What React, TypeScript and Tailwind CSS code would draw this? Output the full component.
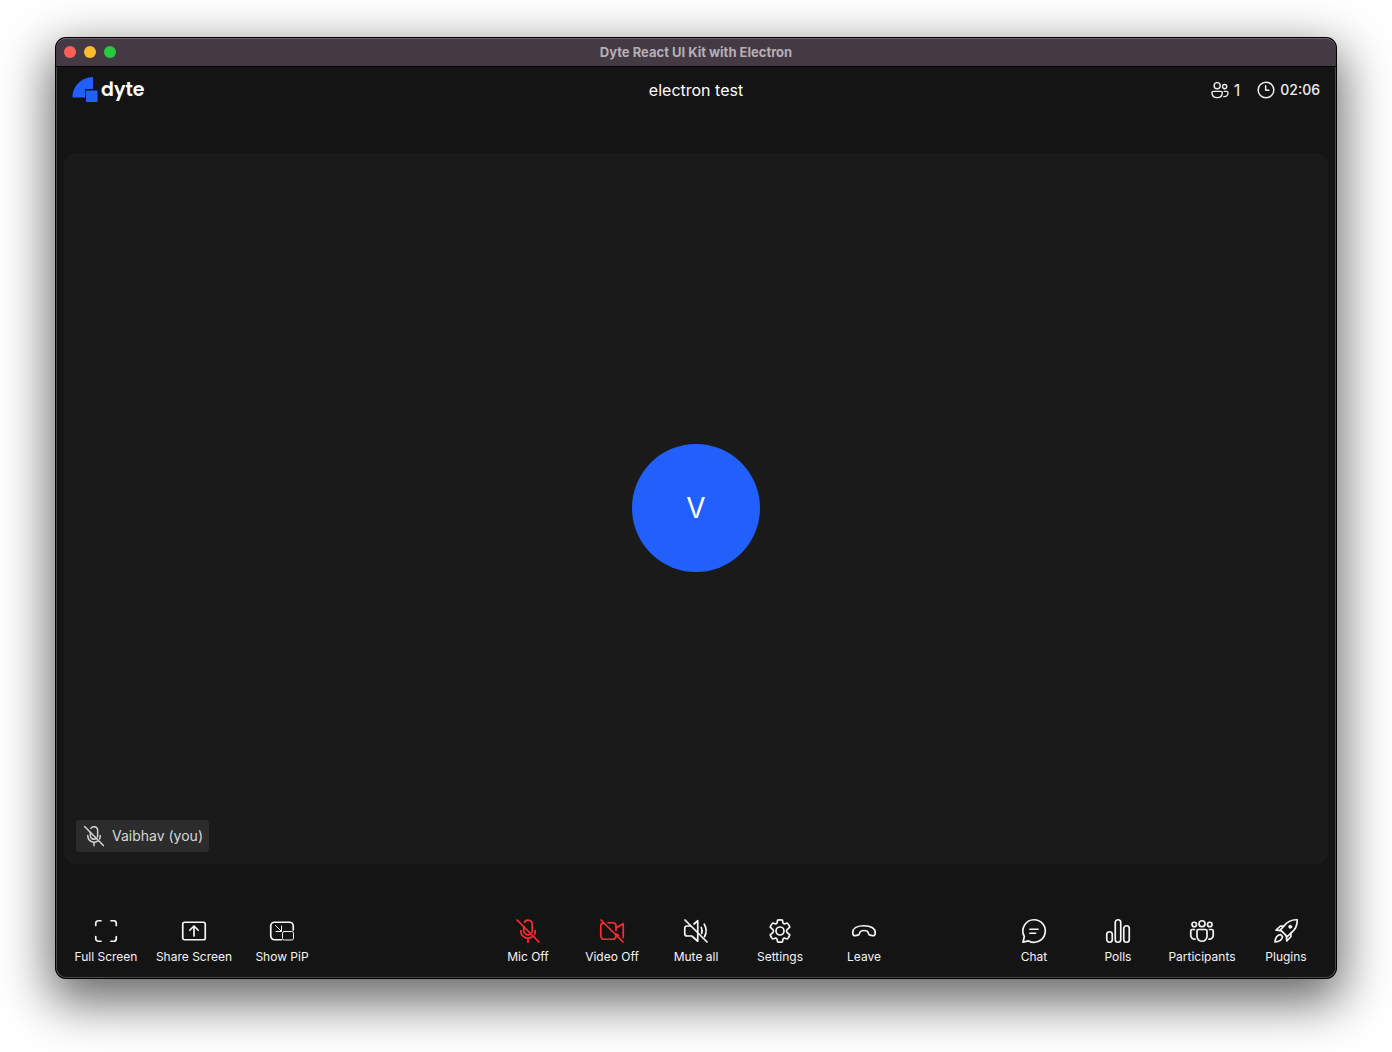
import React from "react";

type IconProps = { className?: string; children?: React.ReactNode; strokeWidth?: number };

function Icon({ className = "size-7", children, strokeWidth = 1.7 }: IconProps) {
  return (
    <svg
      viewBox="0 0 28 28"
      fill="none"
      stroke="currentColor"
      strokeWidth={strokeWidth}
      strokeLinecap="round"
      strokeLinejoin="round"
      className={className}
      aria-hidden="true"
    >
      {children}
    </svg>
  );
}

const FullScreenIcon = () => (
  <Icon>
    <path d="M3.75 8.5V6.25a2.5 2.5 0 0 1 2.5-2.5H9M19 3.75h2.75a2.5 2.5 0 0 1 2.5 2.5V8.5M24.25 19.5v2.25a2.5 2.5 0 0 1-2.5 2.5H19M9 24.25H6.25a2.5 2.5 0 0 1-2.5-2.5V19.5" />
  </Icon>
);

const ShareIcon = () => (
  <Icon>
    <rect x="2.75" y="5.25" width="22.5" height="17.5" rx="1.75" />
    <path d="M14 19V9.5M9.75 13.25 14 9l4.25 4.25" />
  </Icon>
);

const PipIcon = () => (
  <Icon>
    <path d="M13.5 22.75H6.5a3.75 3.75 0 0 1-3.75-3.75V9A3.75 3.75 0 0 1 6.5 5.25h15A3.75 3.75 0 0 1 25.25 9v4" />
    <rect x="14.5" y="14.5" width="11" height="8.5" rx="1.75" strokeWidth="1" />
    <path d="m7.500 8.500 5.500 5.500M13.500 9v5.500H8" strokeWidth="1" />
  </Icon>
);

const MicOffIcon = ({ className }: { className?: string }) => (
  <Icon className={className}>
    <path d="M3 3l22 22" />
    <path d="M10.4 5.2A4.25 4.25 0 0 1 18.25 7v6.5c0 .7-.15 1.3-.4 1.9M9.75 9.8v3.7a4.25 4.25 0 0 0 6.4 3.7" />
    <path d="M6.75 13.5v.5A7.25 7.25 0 0 0 18 20M21.25 13.5v.5c0 1.2-.3 2.4-.8 3.4M14 21.25v4" />
  </Icon>
);

const VideoOffIcon = () => (
  <Icon>
    <path d="M3 3l22 22" />
    <path d="M10 5.75h4.75A3.25 3.25 0 0 1 18 9v4.5M18 18v1a3.25 3.25 0 0 1-3.25 3.25H6A3.25 3.25 0 0 1 2.75 19V9A3.25 3.25 0 0 1 5.5 5.8" />
    <path d="m18 11 7.25-4.25V20.5M18 17l2.5 1.5" />
  </Icon>
);

const MuteIcon = () => (
  <Icon>
    <path d="M3 3l22 22" />
    <path d="m12 7 3.75-3.25V15M15.75 16.5v7.75L9.75 19H5a2.25 2.25 0 0 1-2.25-2.25v-5.5A2.25 2.25 0 0 1 5 9h3.5" />
    <path d="M19.25 10.5a8 8 0 0 1 .4 6M22.25 7.25a13 13 0 0 1 .3 12.5" />
  </Icon>
);

const SettingsIcon = () => (
  <Icon>
    <circle cx="14" cy="14" r="4" />
    <path d="M11.6 3.1q2.4-.5 4.8 0l.5 2.5q.4 1.5 1.9 1.2l2.5-.8q1.7 1.8 2.5 4.1l-2 1.8q-1.3 1.1-1.3 2.1t1.3 2.1l2 1.8q-.8 2.3-2.5 4.1l-2.5-.8q-1.5-.3-1.9 1.2l-.5 2.5q-2.4.5-4.8 0l-.5-2.500q-.4-1.500-1.900-1.200l-2.500.8q-1.700-1.800-2.500-4.100l2-1.800Q7.500 15 7.500 14t-1.300-2.100l-2-1.800q.8-2.300 2.500-4.100l2.500.8q1.500.3 1.900-1.200z" />
  </Icon>
);

const LeaveIcon = () => (
  <Icon>
    <path d="M14 8.750c6.500 0 11.250 2.400 11.250 6.700 0 2.600-1 3.600-2.700 3.250l-2.400-.5c-1.100-.25-1.500-.8-1.700-1.900-.3-1.700-.9-2.800-4.450-2.800s-4.150 1.100-4.450 2.800c-.2 1.100-.6 1.650-1.700 1.900l-2.400.5c-1.700.35-2.700-.65-2.700-3.250 0-4.300 4.750-6.700 11.250-6.700z" />
  </Icon>
);

const ChatIcon = () => (
  <Icon>
    <path d="M14 2.750A11.250 11.250 0 1 1 8.700 23.900L3 25.200l1.300-5.700A11.250 11.250 0 0 1 14 2.750z" />
    <path d="M10 12.250h8M10 16.250h5.500" />
  </Icon>
);

const PollsIcon = () => (
  <Icon>
    <rect x="2.750" y="14.750" width="5.500" height="10.500" rx="2.700" />
    <rect x="11.250" y="2.750" width="5.500" height="22.500" rx="2.700" />
    <rect x="19.750" y="8.750" width="5.500" height="16.500" rx="2.700" />
  </Icon>
);

const ParticipantsIcon = () => (
  <Icon>
    <circle cx="14" cy="6.750" r="3" />
    <circle cx="6.250" cy="7.500" r="2.250" />
    <circle cx="21.750" cy="7.500" r="2.250" />
    <path d="M10.500 12.500h7a1.500 1.500 0 0 1 1.500 1.500v5.250a5 5 0 0 1-10 0V14a1.500 1.500 0 0 1 1.500-1.500z" />
    <path d="M6.500 12.500H4.250a1.500 1.500 0 0 0-1.500 1.500v4.250A4 4 0 0 0 7 22.200M21.500 12.500h2.250a1.500 1.500 0 0 1 1.500 1.500v4.250A4 4 0 0 1 21 22.200" />
  </Icon>
);

const PluginsIcon = () => (
  <Icon>
    <path d="M25.200 2.800c-5.700-.3-10 1.900-13.200 6.200L8.400 12.800l6.800 6.800 3.800-3.600c4.300-3.200 6.500-7.500 6.200-13.200z" />
    <path d="M11.800 9.200 8.500 9 4 13.200l4.600.4M18.800 16.200l.2 3.300-4.200 4.500-.4-4.600" />
    <circle cx="18.250" cy="9.750" r="1.500" fill="currentColor" strokeWidth="1" />
    <path d="M8.600 17.500c-3.500.5-5.300 3.200-5.600 7.500 4.300-.3 7-1.900 7.500-5.400z" />
  </Icon>
);

const PeopleIcon = () => (
  <Icon className="size-5" strokeWidth={1.900}>
    <circle cx="10" cy="8" r="4.250" />
    <circle cx="20.500" cy="9.250" r="3" />
    <path d="M4.750 16h10.500a2 2 0 0 1 2 2c0 4.500-3.300 6.750-7.250 6.750S2.750 22.500 2.750 18a2 2 0 0 1 2-2zM19.750 16h3.500a2 2 0 0 1 2 2c0 3.700-2.500 5.500-6 5.200" />
  </Icon>
);

const ClockIcon = () => (
  <Icon className="size-5" strokeWidth={2.100}>
    <circle cx="14" cy="14" r="11" />
    <path d="M13.500 8v6.500H18" />
  </Icon>
);

type Control = { label: string; icon: React.ReactNode; danger?: boolean };

const leftControls: Control[] = [
  { label: "Full Screen", icon: <FullScreenIcon /> },
  { label: "Share Screen", icon: <ShareIcon /> },
  { label: "Show PiP", icon: <PipIcon /> },
];
const centerControls: Control[] = [
  { label: "Mic Off", icon: <MicOffIcon />, danger: true },
  { label: "Video Off", icon: <VideoOffIcon />, danger: true },
  { label: "Mute all", icon: <MuteIcon /> },
  { label: "Settings", icon: <SettingsIcon /> },
  { label: "Leave", icon: <LeaveIcon /> },
];
const rightControls: Control[] = [
  { label: "Chat", icon: <ChatIcon /> },
  { label: "Polls", icon: <PollsIcon /> },
  { label: "Participants", icon: <ParticipantsIcon /> },
  { label: "Plugins", icon: <PluginsIcon /> },
];

function ControlButton({ control, wide }: { control: Control; wide?: boolean }) {
  return (
    <button
      type="button"
      className={`flex flex-col items-center gap-1 whitespace-nowrap text-xs leading-4 text-[#f5f5f5] ${wide ? "w-[84px]" : "w-20"}`}
    >
      <span className={control.danger ? "text-[#ff2d2d]" : ""}>{control.icon}</span>
      <span>{control.label}</span>
    </button>
  );
}

function Logo() {
  return (
    <a href="#" aria-label="dyte" className="flex items-center gap-[3px] text-white">
      <svg viewBox="0 0 26 26" className="size-[26px]" fill="#2160fd" aria-hidden="true">
        <path d="M21 0v12h-8v8.500H0.500C0.500 9.500 9 0.500 21 0z" />
        <path d="M14 13.500H25.500V25H14z" />
      </svg>
      <span className="font-['Poppins','Inter',sans-serif] text-[19px] leading-6 font-semibold">dyte</span>
    </a>
  );
}

export default function App() {
  return (
    <div className="flex h-screen flex-col bg-white px-14 pt-[38px] pb-[74px] font-['Inter',sans-serif]">
      <main className="flex min-h-0 flex-1 flex-col overflow-hidden rounded-[10px] bg-[#141414] shadow-[0_0_0_1px_#000000,0_18px_50px_6px_rgba(0,0,0,0.6)] inset-ring inset-ring-[#484848]">
        <div className="grid h-[29px] shrink-0 grid-cols-[1fr_auto_1fr] items-center rounded-t-[10px] border-b border-black bg-[#433a43] px-2 inset-shadow-[0_1px_0_#6b656b]">
          <div className="flex gap-2">
            <button type="button" aria-label="Close" className="size-3 rounded-full bg-[#ff5f57]" />
            <button type="button" aria-label="Minimize" className="size-3 rounded-full bg-[#febc2e]" />
            <button type="button" aria-label="Zoom" className="size-3 rounded-full bg-[#28c840]" />
          </div>
          <h1 className="text-[13px] leading-4 font-bold text-[#b5afb5]">Dyte React UI Kit with Electron</h1>
        </div>

        <header className="grid h-[46px] shrink-0 grid-cols-[1fr_auto_1fr] items-center px-4 text-[#eeeeee]">
          <Logo />
          <h2 className="text-base leading-6 text-white">electron test</h2>
          <div className="flex items-center justify-end gap-4">
            <div className="flex items-center gap-1 text-base leading-6">
              <PeopleIcon />
              <span>1</span>
            </div>
            <div className="flex items-center gap-1 text-sm leading-6 font-medium">
              <ClockIcon />
              <time>02:06</time>
            </div>
          </div>
        </header>

        <section className="flex min-h-0 flex-1 flex-col px-2 pt-10 pb-10">
          <div className="relative flex flex-1 items-center justify-center rounded-xl bg-[#1a1a1a] pb-px">
            <div className="flex size-32 items-center justify-center rounded-full bg-[#2160fd] text-[28px] leading-8 text-white">V</div>
            <div className="absolute bottom-3 left-3 flex h-8 items-center gap-1.5 rounded-sm bg-[#2c2c2c] px-1.5 text-sm text-[#d8d8d8]">
              <MicOffIcon className="size-6" />
              <span>Vaibhav (you)</span>
            </div>
          </div>
        </section>

        <footer className="grid shrink-0 grid-cols-[1fr_auto_1fr] items-center px-2 py-[13px]">
          <div className="flex gap-1">
            {leftControls.map((c) => (
              <ControlButton key={c.label} control={c} wide />
            ))}
          </div>
          <div className="flex gap-1">
            {centerControls.map((c) => (
              <ControlButton key={c.label} control={c} />
            ))}
          </div>
          <div className="flex justify-end gap-1 pr-0.5">
            {rightControls.map((c) => (
              <ControlButton key={c.label} control={c} />
            ))}
          </div>
        </footer>
      </main>
    </div>
  );
}
